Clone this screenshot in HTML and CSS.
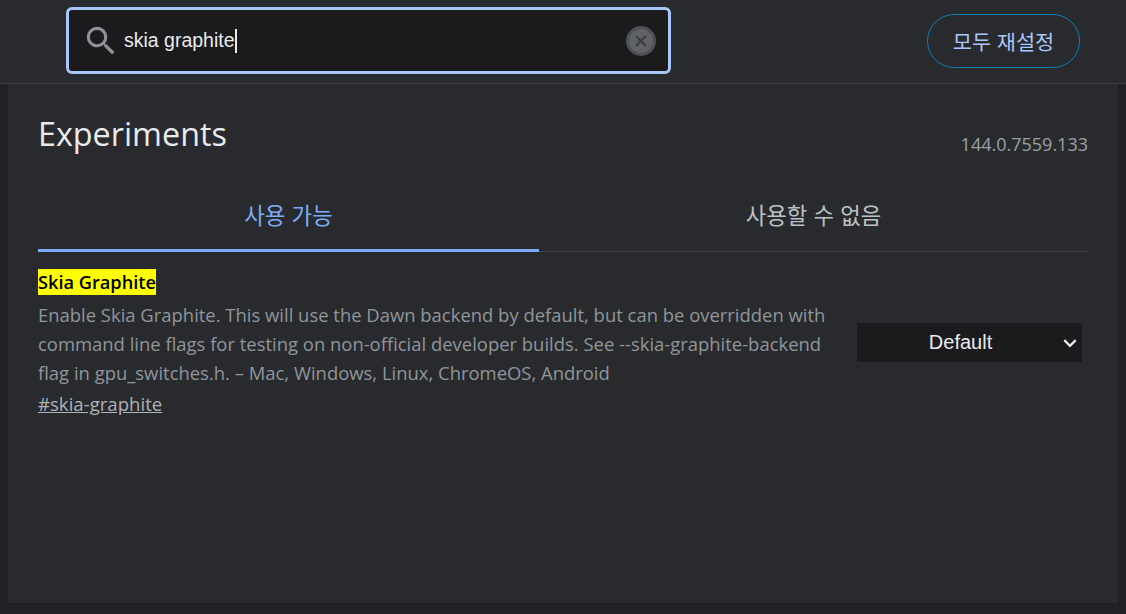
FILE: index.html
```html
<!DOCTYPE html>
<html lang="ko">
<head>
<meta charset="utf-8">
<title>Experiments</title>
<link rel="stylesheet" href="styles.css">
</head>
<body>
<header class="header">
  <div class="search">
    <svg class="search-icon" viewBox="0 0 24 24" width="38" height="38"><path d="M15.5 14h-.79l-.28-.27A6.47 6.47 0 0 0 16 9.5 6.5 6.5 0 1 0 9.5 16c1.61 0 3.09-.59 4.23-1.57l.27.28v.79l5 4.99L20.49 19l-4.99-5zm-6 0C7.01 14 5 11.99 5 9.5S7.01 5 9.5 5 14 7.01 14 9.5 11.99 14 9.5 14z"/></svg>
    <span class="query">skia graphite</span><span class="caret"></span>
    <span class="clear"><svg viewBox="0 0 16 16" width="16" height="16"><path d="M3 3l10 10M13 3L3 13"/></svg></span>
  </div>
  <button class="reset">모두 재설정</button>
</header>
<main class="panel">
  <div class="title-row">
    <h1 class="title">Experiments</h1>
    <span class="version">144.0.7559.133</span>
  </div>
  <div class="tabs">
    <div class="tab active">사용 가능</div>
    <div class="tab">사용할 수 없음</div>
  </div>
  <section class="flag">
    <div class="flag-text">
      <h2 class="flag-name"><mark class="hit">Skia Graphite</mark></h2>
      <p class="flag-desc">Enable Skia Graphite. This will use the Dawn backend by default, but can be overridden with command line flags for testing on non-official developer builds. See --skia-graphite-backend flag in gpu_switches.h. – Mac, Windows, Linux, ChromeOS, Android</p>
      <a class="flag-link" href="#skia-graphite">#skia-graphite</a>
    </div>
    <div class="select">
      <span class="select-label">Default</span>
      <svg class="chevron" viewBox="0 0 14 14" width="16" height="16"><path d="M2 4.5l5 5 5-5"/></svg>
    </div>
  </section>
</main>
</body>
</html>
```

FILE: styles.css
```css
* { box-sizing: border-box; }
html, body { margin: 0; height: 100%; }
body {
  width: 1126px;
  height: 614px;
  overflow: hidden;
  background: #202124;
  font-family: "Open Sans", "Noto Sans CJK KR", sans-serif;
  display: flex;
  flex-direction: column;
}
.header {
  height: 84px;
  flex: none;
  background: #292a2d;
  border-bottom: 1px solid #3f4042;
  display: flex;
  align-items: flex-start;
  padding: 7px 46px 0 66px;
  justify-content: space-between;
}
.search {
  width: 605px;
  height: 67px;
  background: #1b1b1d;
  border: 3px solid #a8c7fa;
  border-radius: 6px;
  display: flex;
  align-items: center;
  padding: 0 12px 0 13px;
}
.search-icon { fill: #8f9194; flex: none; }
.query {
  margin-left: 4px;
  font: 19.5px "Liberation Sans", sans-serif;
  color: #e8eaed;
}
.caret { width: 2px; height: 24px; background: #e8eaed; }
.clear {
  margin-left: auto;
  width: 30px;
  height: 30px;
  border-radius: 50%;
  background: #5f6368;
  border: 3px solid #4f5054;
  display: flex;
  align-items: center;
  justify-content: center;
}
.clear svg { stroke: #3c3d40; stroke-width: 2.2; fill: none; }
.reset {
  margin-top: 7px;
  width: 153px;
  height: 54px;
  border: 1px solid #0b7eb5;
  border-radius: 27px;
  background: transparent;
  color: #a8c7fa;
  font: 20.8px "Noto Sans CJK KR", sans-serif;
  padding: 0;
}
.panel {
  width: 1110px;
  height: 519px;
  margin-left: 8px;
  background: #292a2d;
  padding: 0 30px;
}
.title-row {
  display: flex;
  justify-content: space-between;
  height: 100px;
}
.title {
  margin: 27px 0 0;
  font-size: 32.3px;
  font-weight: 400;
  line-height: 44px;
  color: #e8eaed;
}
.version {
  margin-top: 46px;
  font-size: 18px;
  line-height: 28px;
  color: #9aa0a6;
}
.tabs {
  display: grid;
  grid-template-columns: 501px 1fr;
  height: 68px;
  border-bottom: 1px solid #3f4042;
}
.tab {
  text-align: center;
  font: 22.3px/30px "Noto Sans CJK KR", sans-serif;
  color: #bdc1c6;
  padding-top: 15px;
}
.tab.active {
  color: #7cacf8;
  border-bottom: 3px solid #7cacf8;
  border-radius: 2px 2px 0 0;
  height: 68px;
}
.flag {
  display: flex;
  justify-content: space-between;
  align-items: center;
  padding-top: 17px;
}
.flag-text { width: 800px; }
.flag-name {
  margin: 0;
  font-size: 18.2px;
  line-height: 26px;
  font-weight: 600;
}
.hit { display: inline-block; background: #ffff00; color: #000; }
.flag-desc {
  margin: 5px 0 0;
  font-size: 18.44px;
  line-height: 29px;
  color: #8f969c;
}
.flag-link {
  display: inline-block;
  margin-top: 2px;
  font-size: 18.6px;
  line-height: 29px;
  color: #aeb2b7;
  text-decoration: underline;
}
.select {
  position: relative;
  width: 225px;
  height: 39px;
  margin: 0 6px 2px 0;
  padding-right: 18px;
  background: #1b1b1d;
  color: #e8eaed;
  font: 20px "Liberation Sans", sans-serif;
  display: flex;
  align-items: center;
  justify-content: center;
}
.chevron {
  position: absolute;
  right: 4px;
  top: 12px;
  stroke: #e8eaed;
  stroke-width: 2;
  fill: none;
}
```
